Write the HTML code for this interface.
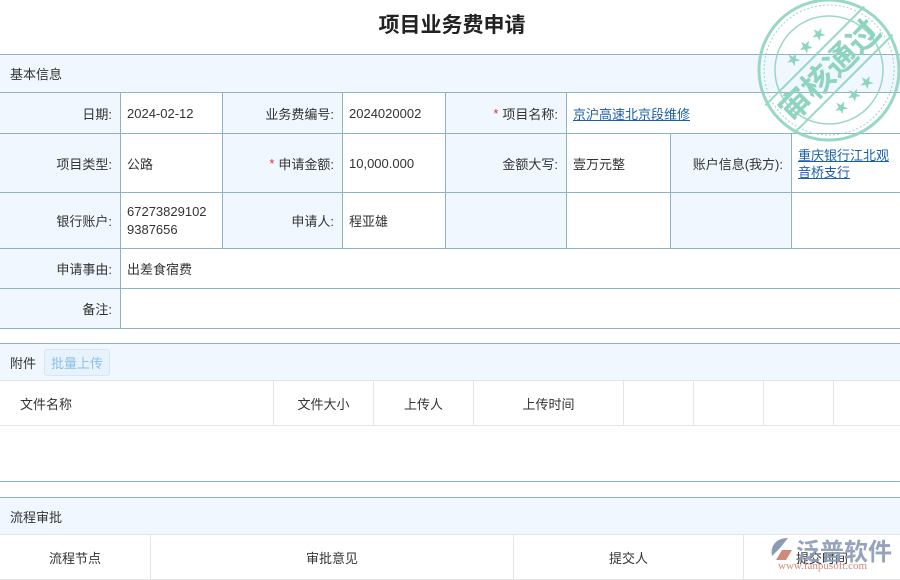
<!DOCTYPE html>
<html><head><meta charset="utf-8"><style>
*{margin:0;padding:0;box-sizing:border-box}
body{width:900px;height:580px;overflow:hidden;background:#fff;font-family:"Liberation Sans","Noto Sans CJK SC",sans-serif;font-size:13px;color:#333;position:relative}
.a{position:absolute}
.c{position:absolute;border-right:1px solid #8fb3c3;border-bottom:1px solid #8fb3c3;display:flex;align-items:center;padding:0 6px}
.l{background:#f0f7fe;justify-content:flex-end;padding-right:8px}
.lk{color:#1b5fa8;text-decoration:underline}
.s{color:#d33;margin-right:4px}
.h{position:absolute;left:0;width:900px;background:#f0f7fe;border-top:1px solid #8fb3c3;display:flex;align-items:center;padding-left:10px}
.t{position:absolute;border-right:1px solid #e5e5e5;border-bottom:1px solid #e5e5e5;display:flex;align-items:center;justify-content:center}
</style></head><body>
<div class="a" style="left:0;top:9px;width:904px;text-align:center;font-size:21px;font-weight:bold;color:#222">项目业务费申请</div>
<div class="h" style="top:54px;height:39px;border-bottom:1px solid #8fb3c3">基本信息</div>

<div class="c l" style="left:0;top:93px;width:121px;height:41px">日期:</div>
<div class="c" style="left:121px;top:93px;width:102px;height:41px">2024-02-12</div>
<div class="c l" style="left:223px;top:93px;width:120px;height:41px">业务费编号:</div>
<div class="c" style="left:343px;top:93px;width:103px;height:41px">2024020002</div>
<div class="c l" style="left:446px;top:93px;width:121px;height:41px"><span class="s">*</span>项目名称:</div>
<div class="c" style="left:567px;top:93px;width:333px;height:41px;border-right:none"><span class="lk">京沪高速北京段维修</span></div>

<div class="c l" style="left:0;top:134px;width:121px;height:59px">项目类型:</div>
<div class="c" style="left:121px;top:134px;width:102px;height:59px">公路</div>
<div class="c l" style="left:223px;top:134px;width:120px;height:59px"><span class="s">*</span>申请金额:</div>
<div class="c" style="left:343px;top:134px;width:103px;height:59px">10,000.000</div>
<div class="c l" style="left:446px;top:134px;width:121px;height:59px">金额大写:</div>
<div class="c" style="left:567px;top:134px;width:104px;height:59px">壹万元整</div>
<div class="c l" style="left:671px;top:134px;width:121px;height:59px">账户信息(我方):</div>
<div class="c" style="left:792px;top:134px;width:108px;height:59px;align-items:flex-start;padding-top:13px;line-height:17px;border-right:none"><span class="lk">重庆银行江北观音桥支行</span></div>

<div class="c l" style="left:0;top:193px;width:121px;height:56px">银行账户:</div>
<div class="c" style="left:121px;top:193px;width:102px;height:56px;line-height:18px">67273829102<br>9387656</div>
<div class="c l" style="left:223px;top:193px;width:120px;height:56px">申请人:</div>
<div class="c" style="left:343px;top:193px;width:103px;height:56px">程亚雄</div>
<div class="c l" style="left:446px;top:193px;width:121px;height:56px"></div>
<div class="c" style="left:567px;top:193px;width:104px;height:56px"></div>
<div class="c l" style="left:671px;top:193px;width:121px;height:56px"></div>
<div class="c" style="left:792px;top:193px;width:108px;height:56px;border-right:none"></div>

<div class="c l" style="left:0;top:249px;width:121px;height:40px">申请事由:</div>
<div class="c" style="left:121px;top:249px;width:779px;height:40px;border-right:none">出差食宿费</div>
<div class="c l" style="left:0;top:289px;width:121px;height:40px">备注:</div>
<div class="c" style="left:121px;top:289px;width:779px;height:40px;border-right:none"></div>

<div class="h" style="top:343px;height:38px;border-bottom:1px solid #e5e5e5">附件<span style="margin-left:8px;padding:3px 6px;border:1px solid #d5e7f5;border-radius:3px;background:#e6f2fc;color:#8cbfe6">批量上传</span></div>
<div class="t" style="left:0;top:381px;width:274px;height:45px;justify-content:flex-start;padding-left:20px">文件名称</div>
<div class="t" style="left:274px;top:381px;width:100px;height:45px">文件大小</div>
<div class="t" style="left:374px;top:381px;width:100px;height:45px">上传人</div>
<div class="t" style="left:474px;top:381px;width:150px;height:45px">上传时间</div>
<div class="t" style="left:624px;top:381px;width:70px;height:45px"></div>
<div class="t" style="left:694px;top:381px;width:70px;height:45px"></div>
<div class="t" style="left:764px;top:381px;width:70px;height:45px"></div>
<div class="t" style="left:834px;top:381px;width:66px;height:45px;border-right:none"></div>
<div class="a" style="left:0;top:481px;width:900px;border-top:1px solid #8fb3c3"></div>

<div class="h" style="top:497px;height:38px;border-bottom:1px solid #e5e5e5">流程审批</div>
<div class="t" style="left:0;top:535px;width:151px;height:45px">流程节点</div>
<div class="t" style="left:151px;top:535px;width:363px;height:45px">审批意见</div>
<div class="t" style="left:514px;top:535px;width:230px;height:45px">提交人</div>
<div class="t" style="left:744px;top:535px;width:156px;height:45px;border-right:none">提交时间</div>

<svg class="a" style="left:750px;top:0" width="150" height="150" viewBox="750 0 150 150">
<g fill="none" stroke="#8fd4bf" opacity="0.9">
<circle cx="829" cy="70" r="70" stroke-width="3"/>
<circle cx="829" cy="70" r="65" stroke-width="1" stroke-dasharray="2 2"/>
<circle cx="829" cy="70" r="54" stroke-width="1.5"/>
<g transform="rotate(-45 829 70)">
<line x1="759" y1="50" x2="899" y2="50" stroke-width="2"/>
<line x1="759" y1="90" x2="899" y2="90" stroke-width="2"/>
</g></g>
<g fill="#8fd4bf" transform="rotate(-45 829 70)">
<text x="829" y="82" font-size="32" font-weight="bold" text-anchor="middle" font-family="Noto Sans CJK SC,sans-serif">审核通过</text>
<text x="829" y="42" font-size="14" text-anchor="middle">★ ★ ★</text>
<text x="829" y="110" font-size="14" text-anchor="middle">★ ★ ★</text>
</g>
</svg>
<svg class="a" style="left:768px;top:536px" width="28" height="26" viewBox="0 0 28 26"><path d="M20 2 C8 2 2 10 4 20 L12 12 Z" fill="#8a9bb5"/><path d="M14 14 L24 14 L18 24 L8 24 Z" fill="#d08a7a"/></svg>
<div class="a" style="left:796px;top:532px;font-size:24px;color:#8a9bb5;font-weight:bold;opacity:.9">泛普软件</div>
<div class="a" style="left:778px;top:560px;font-size:11px;color:#d08a7a;font-family:'Liberation Serif',serif">www.fanpusoft.com</div>
</body></html>
